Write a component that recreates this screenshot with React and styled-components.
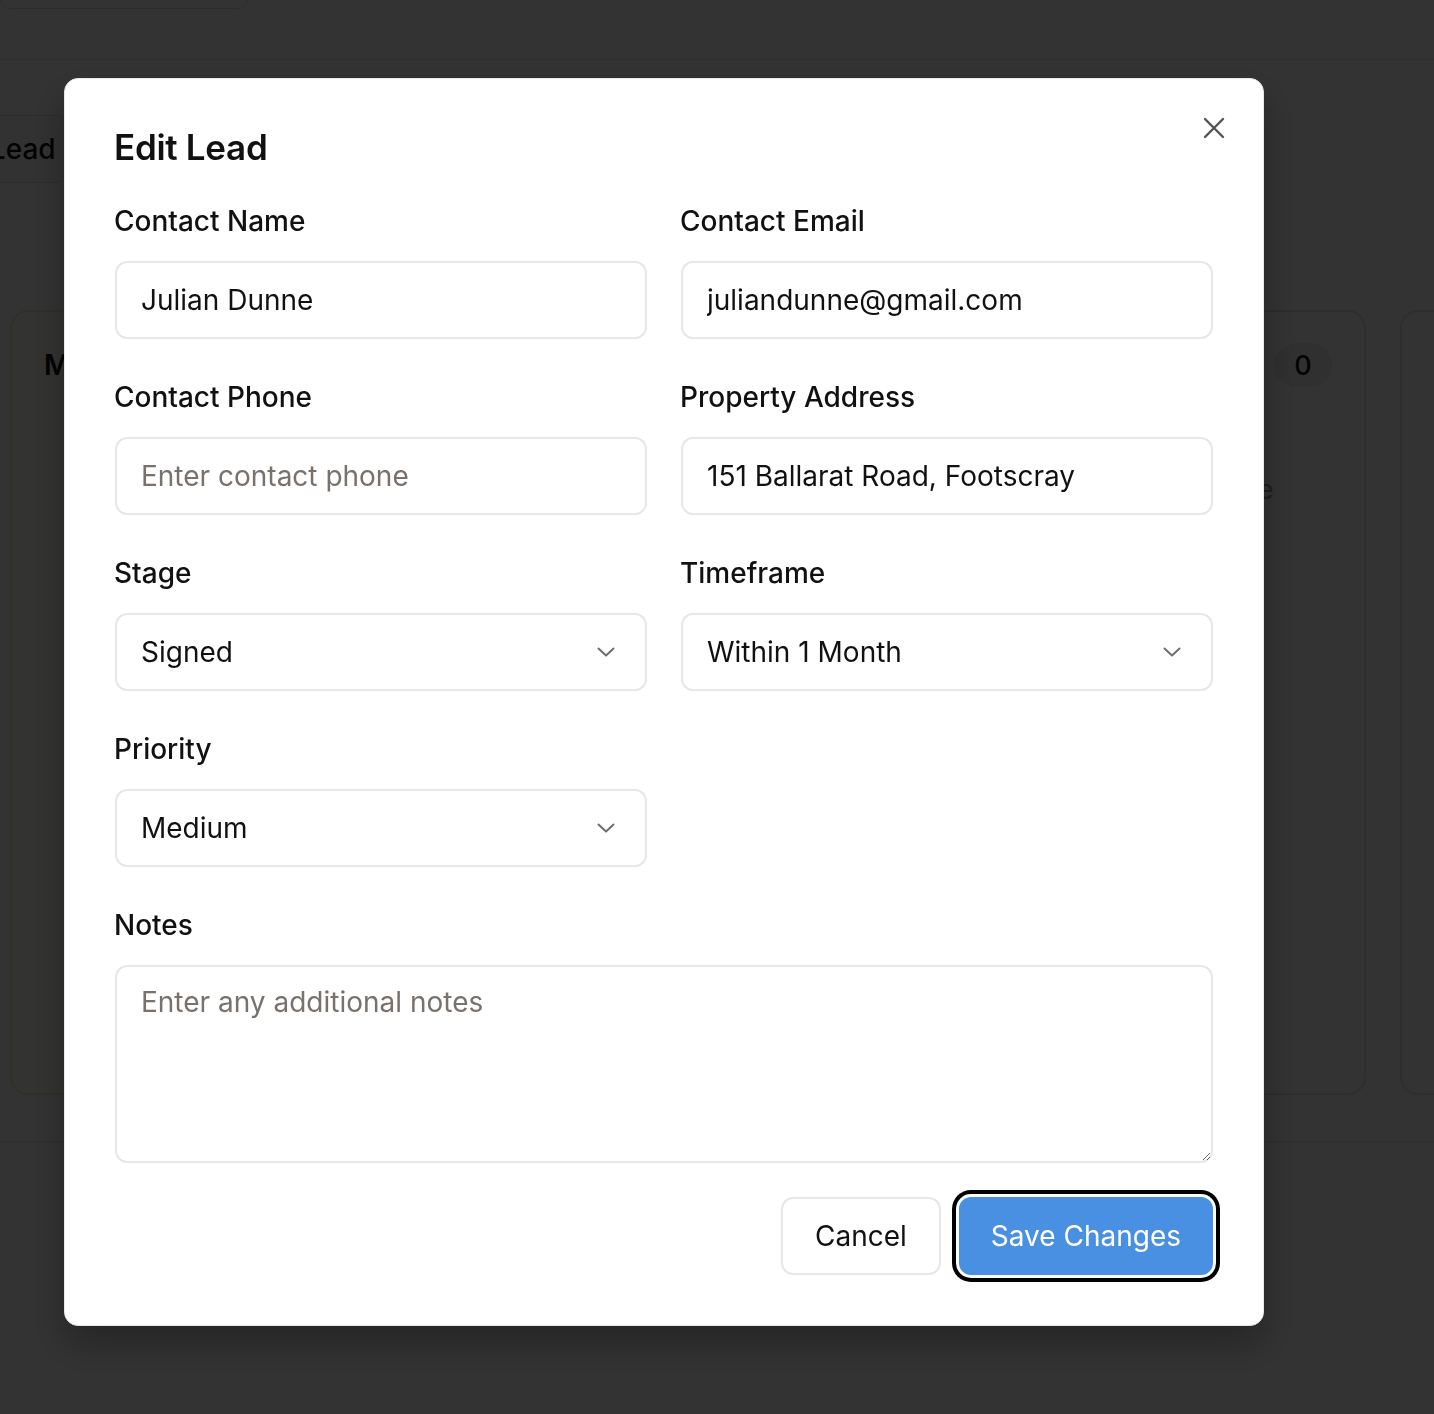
import React from 'react';
import styled, { createGlobalStyle } from 'styled-components';
import { X } from 'lucide-react';

const GlobalStyle = createGlobalStyle`
  * {
    box-sizing: border-box;
  }
  body {
    margin: 0;
    background: #ffffff;
    font-family: Inter, 'Noto Sans', sans-serif;
    color: #111111;
  }
`;

const Page = styled.div`
  min-height: 1414px;
  overflow: hidden;
`;

const Header = styled.header`
  height: 60px;
  border-bottom: 1px solid #e8e8e8;
  display: flex;
  align-items: flex-start;
`;

const SearchStub = styled.div`
  width: 248px;
  height: 9px;
  border: 1px solid #dddddd;
  border-top: none;
  border-radius: 0 0 10px 10px;
`;

const Toolbar = styled.div`
  display: flex;
  padding-top: 55px;
`;

const AddButton = styled.button`
  height: 68px;
  margin-left: -115px;
  padding: 0 10px 0 16px;
  border: 1px solid #dddddd;
  border-radius: 10px;
  background: #fafafa;
  font-family: inherit;
  font-size: 28px;
  font-weight: 500;
  color: #111111;
`;

const Board = styled.section`
  display: flex;
  gap: 34px;
  margin-top: 127px;
  padding: 0 0 46px 10px;
  border-bottom: 2px solid #eeeeee;
`;

const Column = styled.div`
  flex: 0 0 661px;
  height: 785px;
  border: 2px solid ${(p) => p.$tone};
  border-radius: 18px;
  background: ${(p) => p.$bg};
  padding: 31px 32px;
  display: flex;
  flex-direction: column;
`;

const ColumnHead = styled.div`
  display: flex;
  align-items: center;
  justify-content: space-between;
  height: 44px;
`;

const ColumnTitle = styled.span`
  font-size: 28px;
  font-weight: 600;
`;

const Count = styled.span`
  min-width: 58px;
  height: 44px;
  border-radius: 22px;
  background: #eeeeee;
  display: flex;
  align-items: center;
  justify-content: center;
  font-size: 27px;
  font-weight: 500;
`;

const EmptyNote = styled.p`
  margin: 86px 0 0;
  text-align: center;
  font-size: 27px;
  color: #9a9a9a;
`;

const Overlay = styled.div`
  position: fixed;
  inset: 0;
  background: rgba(0, 0, 0, 0.8);
`;

const Modal = styled.div`
  position: fixed;
  left: 64px;
  top: 78px;
  width: 1200px;
  background: #ffffff;
  border: 1px solid #e6e6e6;
  border-radius: 14px;
  padding: 48px 50px 50px;
  box-shadow: 0 18px 40px rgba(0, 0, 0, 0.3);
`;

const CloseButton = styled.button`
  position: absolute;
  top: 31px;
  right: 31px;
  width: 36px;
  height: 36px;
  padding: 0;
  border: none;
  background: transparent;
  color: #555555;
  display: flex;
  align-items: center;
  justify-content: center;
`;

const Title = styled.h2`
  margin: 0 0 36px -1px;
  font-size: 35px;
  line-height: 40px;
  font-weight: 600;
  letter-spacing: -0.3px;
  color: #111111;
`;

const FormGrid = styled.div`
  display: grid;
  grid-template-columns: 1fr 1fr;
  column-gap: 34px;
  row-gap: 40px;
`;

const Field = styled.label`
  display: flex;
  flex-direction: column;
  gap: 22px;
  grid-column: ${(p) => (p.$wide ? '1 / -1' : 'auto')};
`;

const LabelText = styled.span`
  margin-left: -1px;
  font-size: 28px;
  line-height: 36px;
  font-weight: 500;
  color: #111111;
`;

const controlBase = `
  width: 100%;
  border: 2px solid #e7e7e7;
  border-radius: 12px;
  background: #ffffff;
  font-family: Inter, 'Noto Sans', sans-serif;
  font-size: 28px;
  color: #111111;
  outline: none;
  &::placeholder {
    color: #78716c;
  }
`;

const TextInput = styled.input`
  ${controlBase}
  height: 78px;
  padding: 0 24px;
`;

const SelectWrap = styled.div`
  position: relative;
`;

const Select = styled.select`
  ${controlBase}
  height: 78px;
  padding: 0 60px 0 24px;
  appearance: none;
`;

const Chevron = styled.svg`
  position: absolute;
  right: 32px;
  top: 34px;
  pointer-events: none;
`;

const Notes = styled.textarea`
  ${controlBase}
  height: 198px;
  padding: 17px 24px;
  line-height: 36px;
  resize: vertical;
`;

const Footer = styled.div`
  display: flex;
  justify-content: flex-end;
  gap: 18px;
  margin-top: 34px;
`;

const Button = styled.button`
  height: 78px;
  padding: 0 ${(p) => (p.$primary ? '30px' : '32px')};
  border-radius: 12px;
  font-family: inherit;
  font-size: 28px;
  font-weight: 400;
  border: 2px solid ${(p) => (p.$primary ? '#4a90e2' : '#e7e7e7')};
  background: ${(p) => (p.$primary ? '#4a90e2' : '#ffffff')};
  color: ${(p) => (p.$primary ? '#ffffff' : '#111111')};
  box-shadow: ${(p) => (p.$primary ? '0 0 0 3px #ffffff, 0 0 0 7px #000000' : 'none')};
`;

const ChevronIcon = () => (
  <Chevron width="18" height="10" viewBox="0 0 18 10" fill="none">
    <polyline points="1.5,1.5 9,8.5 16.5,1.5" stroke="#6e6e6e" strokeWidth="2" strokeLinecap="round" strokeLinejoin="round" />
  </Chevron>
);

const SelectField = ({ label, value, options }) => (
  <Field>
    <LabelText>{label}</LabelText>
    <SelectWrap>
      <Select defaultValue={value}>
        {options.map((o) => (
          <option key={o}>{o}</option>
        ))}
      </Select>
      <ChevronIcon />
    </SelectWrap>
  </Field>
);

const App = () => {
  return (
    <Page>
      <GlobalStyle />
      <Header>
        <SearchStub />
      </Header>
      <Toolbar>
        <AddButton>+ Add Lead</AddButton>
      </Toolbar>
      <Board>
        <Column $tone="#f0ecc8" $bg="#fffdf5">
          <ColumnHead>
            <ColumnTitle>Market Appraisal</ColumnTitle>
            <Count>0</Count>
          </ColumnHead>
        </Column>
        <Column $tone="#e3e3f0" $bg="#ffffff">
          <ColumnHead>
            <ColumnTitle>Listing Presented</ColumnTitle>
            <Count>0</Count>
          </ColumnHead>
          <EmptyNote>Drop leads here to move to this stage</EmptyNote>
        </Column>
        <Column $tone="#dcebdc" $bg="#ffffff">
          <ColumnHead>
            <ColumnTitle>Signed</ColumnTitle>
            <Count>1</Count>
          </ColumnHead>
        </Column>
      </Board>

      <Overlay />
      <Modal>
        <CloseButton aria-label="Close">
          <X size={36} strokeWidth={1.6} />
        </CloseButton>
        <Title>Edit Lead</Title>
        <FormGrid>
          <Field>
            <LabelText>Contact Name</LabelText>
            <TextInput defaultValue="Julian Dunne" placeholder="Enter contact name" />
          </Field>
          <Field>
            <LabelText>Contact Email</LabelText>
            <TextInput defaultValue="juliandunne@gmail.com" placeholder="Enter contact email" />
          </Field>
          <Field>
            <LabelText>Contact Phone</LabelText>
            <TextInput placeholder="Enter contact phone" />
          </Field>
          <Field>
            <LabelText>Property Address</LabelText>
            <TextInput defaultValue="151 Ballarat Road, Footscray" placeholder="Enter property address" />
          </Field>
          <SelectField
            label="Stage"
            value="Signed"
            options={['New Lead', 'Market Appraisal', 'Listing Presented', 'Signed']}
          />
          <SelectField
            label="Timeframe"
            value="Within 1 Month"
            options={['Immediately', 'Within 1 Month', 'Within 3 Months', '6+ Months']}
          />
          <SelectField label="Priority" value="Medium" options={['Low', 'Medium', 'High']} />
          <div />
          <Field $wide>
            <LabelText>Notes</LabelText>
            <Notes placeholder="Enter any additional notes" />
          </Field>
        </FormGrid>
        <Footer>
          <Button>Cancel</Button>
          <Button $primary>Save Changes</Button>
        </Footer>
      </Modal>
    </Page>
  );
};

export default App;
